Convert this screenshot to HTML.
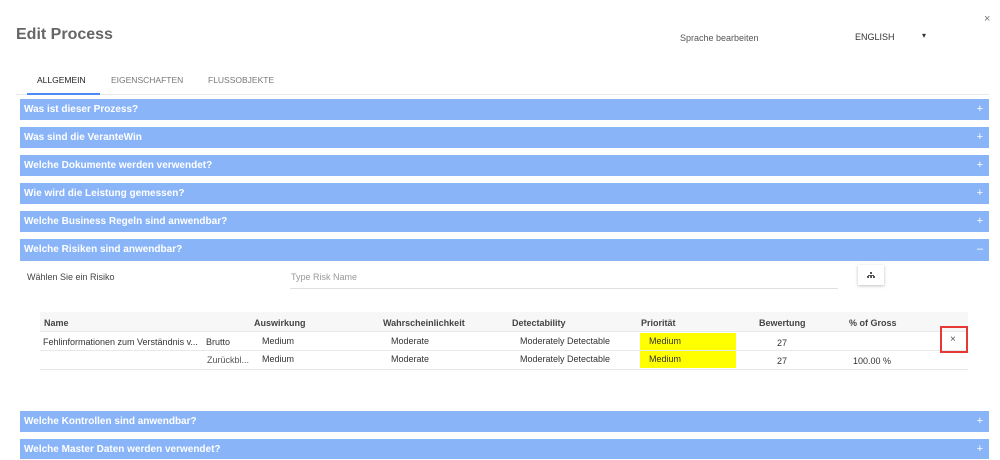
<!DOCTYPE html>
<html><head><meta charset="utf-8">
<style>
*{margin:0;padding:0;box-sizing:border-box}
body{width:1000px;height:459px;background:#fff;font-family:"Liberation Sans",sans-serif;position:relative;overflow:hidden;color:#333}
.a{position:absolute;white-space:nowrap}
.p{position:absolute;left:20px;width:969px;height:21px;background:#8ab4f8;color:#fff;font-size:10px;font-weight:bold;line-height:21px;padding-left:4px}
.p span{position:absolute;right:6px;top:0;font-weight:normal;font-size:11px}
.t{font-size:9px;color:#333}
.h{font-size:9px;font-weight:bold;color:#444}
</style></head><body>
<div class="a" style="left:16px;top:26px;font-size:16px;font-weight:bold;color:#666">Edit Process</div>
<div class="a" style="left:680px;top:33px;font-size:9px;color:#555">Sprache bearbeiten</div>
<div class="a" style="left:855px;top:32px;font-size:9px;color:#333">ENGLISH</div>
<div class="a" style="left:922px;top:31px;font-size:8px;color:#333">▾</div>
<div class="a" style="left:984px;top:13px;font-size:11px;color:#777">×</div>
<div class="a" style="left:37px;top:75px;font-size:8.5px;color:#222">ALLGEMEIN</div>
<div class="a" style="left:111px;top:75px;font-size:8.5px;color:#777">EIGENSCHAFTEN</div>
<div class="a" style="left:208px;top:75px;font-size:8.5px;color:#777">FLUSSOBJEKTE</div>
<div class="a" style="left:16px;top:94px;width:973px;height:1px;background:#e8e8e8"></div>
<div class="a" style="left:27px;top:93px;width:73px;height:2px;background:#4a8af4"></div>

<div class="p" style="top:99px">Was ist dieser Prozess?<span>+</span></div>
<div class="p" style="top:127px">Was sind die VeranteWin<span>+</span></div>
<div class="p" style="top:155px">Welche Dokumente werden verwendet?<span>+</span></div>
<div class="p" style="top:183px">Wie wird die Leistung gemessen?<span>+</span></div>
<div class="p" style="top:211px">Welche Business Regeln sind anwendbar?<span>+</span></div>
<div class="p" style="top:239px;height:22px">Welche Risiken sind anwendbar?<span>–</span></div>

<div class="a" style="left:27px;top:272px;font-size:9px;color:#444">Wählen Sie ein Risiko</div>
<div class="a" style="left:291px;top:272px;font-size:9px;color:#999">Type Risk Name</div>
<div class="a" style="left:290px;top:288px;width:548px;height:1px;background:#e0e0e0"></div>
<div class="a" style="left:858px;top:265px;width:26px;height:20px;background:#fff;box-shadow:0 1px 3px rgba(0,0,0,.25)">
<svg width="26" height="20" viewBox="0 0 26 20"><g fill="#555"><rect x="12" y="7" width="2" height="2"/><rect x="10" y="10" width="6" height="1"/><rect x="9" y="11" width="2" height="2"/><rect x="12" y="11" width="2" height="2"/><rect x="15" y="11" width="2" height="2"/></g></svg></div>

<div class="a" style="left:40px;top:312px;width:928px;height:20px;background:#f7f7f7;border-bottom:1px solid #e8e8e8"></div>
<div class="a" style="left:40px;top:350px;width:928px;height:1px;background:#e8e8e8"></div>
<div class="a" style="left:40px;top:369px;width:928px;height:1px;background:#e6e6e6"></div>
<div class="a h" style="left:44px;top:318px">Name</div>
<div class="a h" style="left:254px;top:318px">Auswirkung</div>
<div class="a h" style="left:383px;top:318px">Wahrscheinlichkeit</div>
<div class="a h" style="left:512px;top:318px">Detectability</div>
<div class="a h" style="left:641px;top:318px">Priorität</div>
<div class="a h" style="left:759px;top:318px">Bewertung</div>
<div class="a h" style="left:849px;top:318px">% of Gross</div>

<div class="a" style="left:640px;top:333px;width:96px;height:17px;background:#ffff00"></div>
<div class="a" style="left:640px;top:351px;width:96px;height:17px;background:#ffff00"></div>

<div class="a t" style="left:43px;top:337px">Fehlinformationen zum Verständnis v...</div>
<div class="a t" style="left:206px;top:337px">Brutto</div>
<div class="a t" style="left:262px;top:336px">Medium</div>
<div class="a t" style="left:391px;top:336px">Moderate</div>
<div class="a t" style="left:520px;top:336px">Moderately Detectable</div>
<div class="a t" style="left:649px;top:336px">Medium</div>
<div class="a t" style="left:777px;top:338px">27</div>
<div class="a" style="left:940px;top:326px;width:28px;height:27px;border:2px solid #e53935"></div>
<div class="a" style="left:950px;top:334px;font-size:10px;color:#555">×</div>

<div class="a t" style="left:207px;top:355px;color:#555">Zurückbl...</div>
<div class="a t" style="left:262px;top:354px">Medium</div>
<div class="a t" style="left:391px;top:354px">Moderate</div>
<div class="a t" style="left:520px;top:354px">Moderately Detectable</div>
<div class="a t" style="left:649px;top:354px">Medium</div>
<div class="a t" style="left:777px;top:356px">27</div>
<div class="a t" style="left:853px;top:356px">100.00 %</div>

<div class="p" style="top:411px">Welche Kontrollen sind anwendbar?<span>+</span></div>
<div class="p" style="top:439px;height:20px">Welche Master Daten werden verwendet?<span>+</span></div>
</body></html>
